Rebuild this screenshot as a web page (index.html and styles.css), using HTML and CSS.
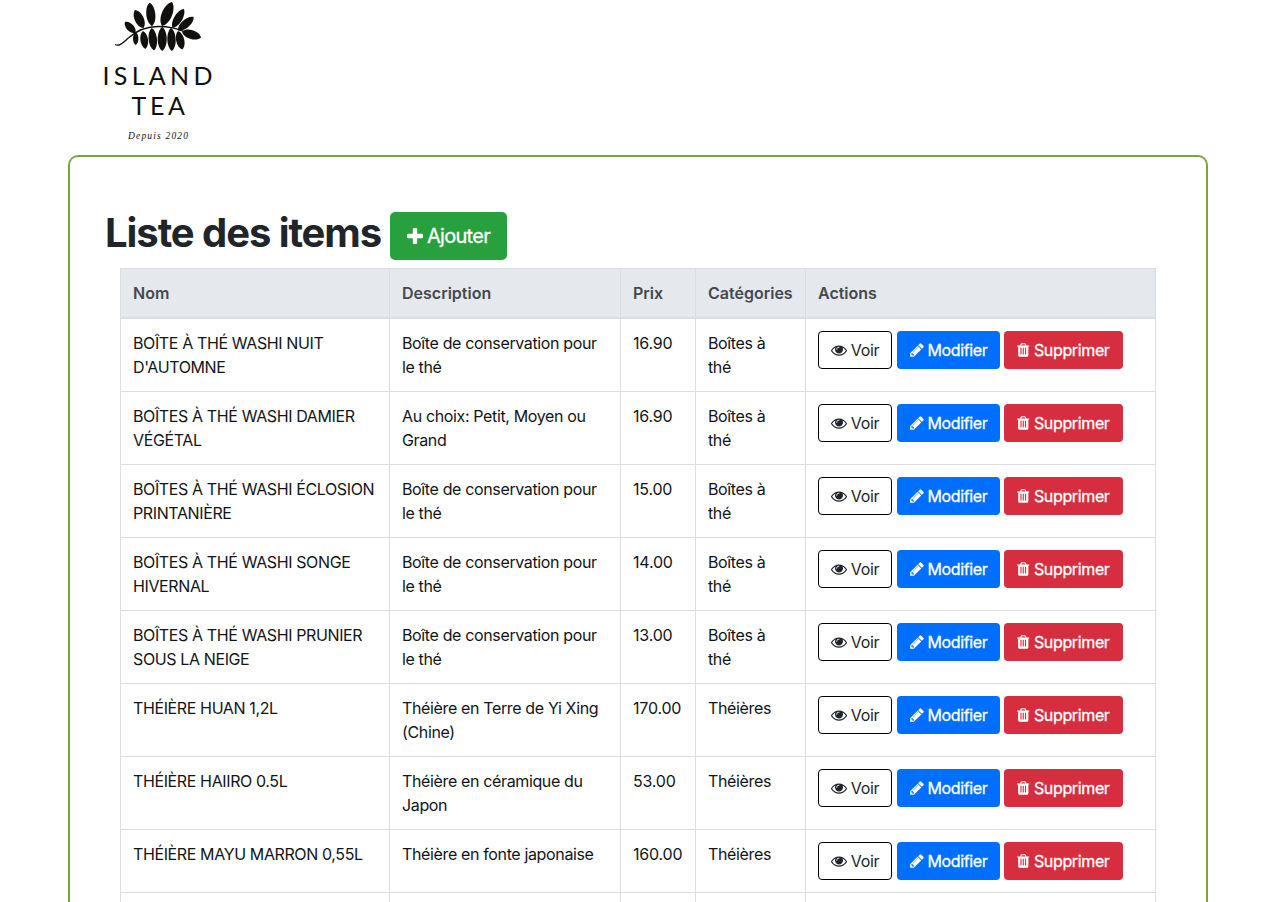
FILE: index.html
```html
<!DOCTYPE html>
<html lang="fr">
<head>
<meta charset="utf-8">
<title>Island Tea</title>
<link rel="stylesheet" href="styles.css">
</head>
<body>
<svg class="sprite" aria-hidden="true">
  <symbol id="plus" viewBox="192 128 1408 1408"><path d="M1600 736v192q0 40-28 68t-68 28h-416v416q0 40-28 68t-68 28h-192q-40 0-68-28t-28-68v-416h-416q-40 0-68-28t-28-68v-192q0-40 28-68t68-28h416v-416q0-40 28-68t68-28h192q40 0 68 28t28 68v416h416q40 0 68 28t28 68z"/></symbol>
  <symbol id="eye" viewBox="0 0 1792 1792"><path d="M1664 960q-152-236-381-353 61 104 61 225 0 185-131.5 316.5t-316.5 131.5-316.5-131.5-131.5-316.5q0-121 61-225-229 117-381 353 133 205 333.5 326.5t434.5 121.5 434.5-121.5 333.5-326.5zm-720-384q0-20-14-34t-34-14q-125 0-214.5 89.5t-89.5 214.5q0 20 14 34t34 14 34-14 14-34q0-86 61-147t147-61q20 0 34-14t14-34zm848 384q0 34-20 69-140 230-376.5 368.5t-499.5 138.5-499.5-139-376.5-368q-20-35-20-69t20-69q140-229 376.5-368t499.5-139 499.5 139 376.5 368q20 35 20 69z"/></symbol>
  <symbol id="pencil" viewBox="128 0 1536 1792"><path d="M491 1536l91-91-235-235-91 91v107h128v128h107zm523-928q0-22-22-22-10 0-17 7l-542 542q-7 7-7 17 0 22 22 22 10 0 17-7l542-542q7-7 7-17zm-54-192l416 416-832 832h-416v-416zm683 96q0 53-37 90l-166 166-416-416 166-165q36-38 90-38 53 0 91 38l235 234q37 39 37 91z"/></symbol>
  <symbol id="trash" viewBox="192 0 1408 1792"><path d="M704 1376v-704q0-14-9-23t-23-9h-64q-14 0-23 9t-9 23v704q0 14 9 23t23 9h64q14 0 23-9t9-23zm256 0v-704q0-14-9-23t-23-9h-64q-14 0-23 9t-9 23v704q0 14 9 23t23 9h64q14 0 23-9t9-23zm256 0v-704q0-14-9-23t-23-9h-64q-14 0-23 9t-9 23v704q0 14 9 23t23 9h64q14 0 23-9t9-23zm-544-992h448l-48-117q-7-9-17-11h-317q-10 2-17 11zm928 32v64q0 14-9 23t-23 9h-96v948q0 83-47 143.5t-113 60.5h-832q-66 0-113-58.5t-47-141.5v-952h-96q-14 0-23-9t-9-23v-64q0-14 9-23t23-9h309l70-167q15-37 54-63t79-26h320q40 0 79 26t54 63l70 167h309q14 0 23 9t9 23z"/></symbol>
</svg>
<header class="brand">
  <svg class="logo" width="140" height="150" viewBox="90 0 140 150">
    <defs><path id="leaf" d="M0-10C5.500-7 6.500 6 0 10-6.500 6-5.500-7 0-10z"/></defs>
    <path class="stem" d="M115 44.500c5 2.500 9-3 14-7 8-7 16-11 29-11 12 0 20 2 27 5.500"/>
    <g fill="#12100e">
      <use href="#leaf" transform="translate(130.200 27.500) rotate(-43.700) scale(.8 .76)"/>
      <use href="#leaf" transform="translate(139.200 19) rotate(-25)"/>
      <use href="#leaf" transform="translate(150.800 14.500) rotate(-6) scale(1 1.170)"/>
      <use href="#leaf" transform="translate(167 14) rotate(22.600) scale(1.150 1.300)"/>
      <use href="#leaf" transform="translate(178.200 18.500) rotate(31) scale(.9 1.100)"/>
      <use href="#leaf" transform="translate(185.800 23.700) rotate(49) scale(.9 1.030)"/>
      <use href="#leaf" transform="translate(191.500 34.500) rotate(107.500)"/>
      <use href="#leaf" transform="translate(135.700 38.500) scale(.6 .65)"/>
      <use href="#leaf" transform="translate(144.200 40) rotate(-8) scale(.85 .9)"/>
      <use href="#leaf" transform="translate(152.800 39.300) rotate(-6) scale(.93 1.130)"/>
      <use href="#leaf" transform="translate(162.200 39) scale(1 1.200)"/>
      <use href="#leaf" transform="translate(171.500 39.500) rotate(-2) scale(.93 1.150)"/>
      <use href="#leaf" transform="translate(180.200 40.200) rotate(-13) scale(.9 .95)"/>
    </g>
    <text class="logo-name" x="102.500" y="84.500" textLength="110">ISLAND</text>
    <text class="logo-name" x="131.500" y="115" textLength="53.500">TEA</text>
    <text class="logo-since" x="128" y="139" textLength="60">Depuis 2020</text>
  </svg>
</header>
<main class="panel">
  <div class="heading">
    <h1>Liste des items</h1>
    <a class="btn add"><svg class="i-plus"><use href="#plus"/></svg><span>Ajouter</span></a>
  </div>
  <table class="items">
    <colgroup><col class="c-name"><col class="c-desc"><col class="c-price"><col class="c-cat"><col class="c-act"></colgroup>
    <thead><tr><th>Nom</th><th>Description</th><th>Prix</th><th>Catégories</th><th>Actions</th></tr></thead>
    <tbody id="rows"></tbody>
  </table>
</main>
<script src="items.js"></script>
</body>
</html>
```
FILE: styles.css
```css
* { box-sizing: border-box; }
body { margin: 0; background: #fff; color: #212529; font: 16px/24px Inter, sans-serif; letter-spacing: -0.36px; }
.sprite { position: absolute; width: 0; height: 0; }
.brand { height: 155px; padding-left: 90px; }
.logo { display: block; }
.logo-name { font: 25px Lato, sans-serif; letter-spacing: 0; fill: #12100e; }
.logo-since { font: italic 9.5px "Liberation Serif", serif; letter-spacing: 0; fill: #12100e; }
.stem { fill: none; stroke: #12100e; stroke-width: 1.3; }
.panel { width: 1140px; height: 747px; margin: 0 auto; padding: 50px 34px 0 35px; border: 2px solid #7aa33c; border-bottom: 0; border-radius: 10px 10px 0 0; overflow: hidden; }
.heading { display: flex; align-items: flex-start; height: 61px; padding-top: 5px; }
h1 { width: 285px; margin: 0; font-size: 40px; line-height: 41px; font-weight: 700; letter-spacing: -1.07px; white-space: nowrap; }
.items { width: 1036px; margin-left: 15px; table-layout: fixed; border-collapse: collapse; color: #111518; }
.c-name { width: 269px; }
.c-desc { width: 231px; }
.c-price { width: 75px; }
.c-cat { width: 110px; }
.c-act { width: 350px; }
th, td { padding: 12px; border: 1px solid #dadee2; text-align: left; vertical-align: top; }
th { border-bottom-width: 2px; background: #e5e8ed; color: #43494f; font-weight: 600; letter-spacing: 0; }
.name { letter-spacing: -0.38px; }
.price { letter-spacing: -0.2px; }
.category { padding-right: 20px; }
.actions { display: flex; height: 38px; }
.btn { display: flex; align-items: center; justify-content: center; gap: 4px; height: 38px; border-radius: 4px; color: #fff; white-space: nowrap; -webkit-text-stroke: 0.3px currentColor; }
.btn svg { display: block; fill: currentColor; flex: none; }
.add { width: 117px; height: 48px; border-radius: 5px; background: #28a03e; font-size: 20px; letter-spacing: -0.7px; }
.view { width: 74px; margin-right: 5px; border: 1px solid #000; color: #212529; -webkit-text-stroke: 0; }
.edit { width: 103px; margin-right: 4px; background: #006fff; }
.delete { width: 119px; background: #d62e3e; }
.i-plus { width: 16px; height: 16px; }
.i-eye { width: 16px; height: 16px; }
.i-pencil { width: 14px; height: 16px; }
.i-trash { width: 12.5px; height: 16px; }
```
FILE: items.js
```javascript
const items = [
  ["BOÎTE À THÉ WASHI NUIT D'AUTOMNE", "Boîte de conservation pour le thé", "16.90", "Boîtes à thé"],
  ["BOÎTES À THÉ WASHI DAMIER VÉGÉTAL", "Au choix: Petit, Moyen ou Grand", "16.90", "Boîtes à thé"],
  ["BOÎTES À THÉ WASHI ÉCLOSION PRINTANIÈRE", "Boîte de conservation pour le thé", "15.00", "Boîtes à thé"],
  ["BOÎTES À THÉ WASHI SONGE HIVERNAL", "Boîte de conservation pour le thé", "14.00", "Boîtes à thé"],
  ["BOÎTES À THÉ WASHI PRUNIER SOUS LA NEIGE", "Boîte de conservation pour le thé", "13.00", "Boîtes à thé"],
  ["THÉIÈRE HUAN 1,2L", "Théière en Terre de Yi Xing (Chine)", "170.00", "Théières"],
  ["THÉIÈRE HAIIRO 0.5L", "Théière en céramique du Japon", "53.00", "Théières"],
  ["THÉIÈRE MAYU MARRON 0,55L", "Théière en fonte japonaise", "160.00", "Théières"],
  ["", "", "", ""]
];
const button = (kind, icon, label) =>
  `<a class="btn ${kind}"><svg class="i-${icon}"><use href="#${icon}"/></svg><span>${label}</span></a>`;
const actions = `<div class="actions">${button("view", "eye", "Voir")}${button("edit", "pencil", "Modifier")}${button("delete", "trash", "Supprimer")}</div>`;
document.getElementById("rows").innerHTML = items
  .map(([name, desc, price, cat]) => `<tr><td class="name">${name}</td><td>${desc}</td><td class="price">${price}</td><td class="category">${cat}</td><td>${name ? actions : ""}</td></tr>`)
  .join("");
```
